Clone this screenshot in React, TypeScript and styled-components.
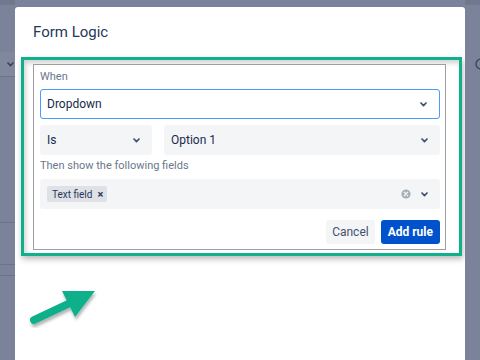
import React from "react";
import styled, { createGlobalStyle } from "styled-components";

const Global = createGlobalStyle`
  html, body {
    margin: 0;
    padding: 0;
    width: 480px;
    height: 360px;
    overflow: hidden;
    background: #7a8399;
    font-family: Roboto, "Liberation Sans", Arial, sans-serif;
  }
  * { box-sizing: border-box; }
`;

const Backdrop = styled.div`
  display: flex;
  width: 480px;
  height: 360px;
  overflow: hidden;
`;

const Strip = styled.div<{ $w: number }>`
  width: ${(p) => p.$w}px;
  flex: none;
  display: flex;
  flex-direction: column;
  overflow: hidden;
  background: #7a8399;
`;

const StripRow = styled.div<{ $h: number; $tone?: "dark" | "light" | "base"; $line?: boolean }>`
  height: ${(p) => p.$h}px;
  flex: none;
  display: flex;
  align-items: center;
  background: ${(p) => (p.$tone === "dark" ? "#6f788e" : p.$tone === "light" ? "#7f889d" : "#7a8399")};
  border-bottom: ${(p) => (p.$line ? "1px solid #6a7389" : "none")};
`;

const StripIcon = styled.div<{ $offset: number }>`
  margin-left: ${(p) => p.$offset}px;
  display: flex;
`;

const Modal = styled.div`
  width: 450px;
  flex: none;
  margin-top: 7px;
  background: #ffffff;
  border-radius: 3px 3px 0 0;
  display: flex;
  flex-direction: column;
`;

const Title = styled.h2`
  margin: 0;
  padding: 15px 18px 0;
  height: 35px;
  font-size: 15px;
  line-height: 20px;
  font-weight: 400;
  color: #253858;
`;

const Highlight = styled.div`
  margin: 15px 0 0 6px;
  width: 441px;
  height: 199px;
  border: 3px solid #10b08a;
  padding: 4px 13px 3px 9px;
  box-shadow: 1px 3px 6px rgba(0, 0, 0, 0.28), inset 2px 3px 5px rgba(0, 0, 0, 0.18);
`;

const Panel = styled.div`
  width: 413px;
  height: 186px;
  border: 1px solid #9e9e9e;
  background: #ffffff;
  padding: 5px 5px 5px 6px;
  display: flex;
  flex-direction: column;
`;

const Label = styled.div<{ $mt: number }>`
  margin-top: ${(p) => p.$mt}px;
  font-size: 11px;
  line-height: 14px;
  color: #6b778c;
`;

const Select = styled.div<{ $focused?: boolean; $w?: number; $mt?: number }>`
  height: 30px;
  margin-top: ${(p) => p.$mt ?? 0}px;
  ${(p) => (p.$w ? `width: ${p.$w}px; flex: none;` : "flex: 1;")}
  display: flex;
  align-items: center;
  padding: 0 12px 0 ${(p) => (p.$focused ? 6 : 7)}px;
  border-radius: 3px;
  background: ${(p) => (p.$focused ? "#ffffff" : "#f4f5f7")};
  border: ${(p) => (p.$focused ? "1px solid #4c9aff" : "none")};
  font-size: 12px;
  color: #172b4d;
`;

const Value = styled.span`
  flex: 1;
  white-space: nowrap;
`;

const Row = styled.div`
  display: flex;
  gap: 12px;
  margin-top: 6px;
`;

const Multi = styled.div`
  height: 30px;
  margin-top: 6px;
  display: flex;
  align-items: center;
  padding: 0 12px 0 7px;
  border-radius: 3px;
  background: #f4f5f7;
  gap: 10px;
`;

const Tags = styled.div`
  flex: 1;
  display: flex;
`;

const Tag = styled.div`
  height: 16px;
  display: flex;
  align-items: center;
  gap: 5px;
  padding: 0 4px 0 5px;
  border-radius: 2px;
  background: #dfe1e6;
  font-size: 10px;
  color: #253858;
`;

const TagX = styled.span`
  font-size: 11px;
  font-weight: 700;
  line-height: 1;
`;

const Actions = styled.div`
  margin-top: 11px;
  display: flex;
  justify-content: flex-end;
  gap: 6px;
`;

const Button = styled.button<{ $primary?: boolean }>`
  height: 24px;
  border: none;
  border-radius: 3px;
  padding: 0 ${(p) => (p.$primary ? 7 : 6)}px;
  font-family: Roboto, "Liberation Sans", Arial, sans-serif;
  font-size: 12px;
  font-weight: ${(p) => (p.$primary ? 700 : 400)};
  background: ${(p) => (p.$primary ? "#0052cc" : "#f4f5f7")};
  color: ${(p) => (p.$primary ? "#ffffff" : "#42526e")};
`;

const ArrowWrap = styled.div`
  margin: 30px 0 0 13px;
  display: flex;
`;

const Chevron = ({ color = "#42526e" }: { color?: string }) => (
  <svg width="7" height="5" viewBox="0 0 7 5">
    <path d="M1 1 L3.5 3.6 L6 1" fill="none" stroke={color} strokeWidth="1.7" strokeLinecap="round" strokeLinejoin="round" />
  </svg>
);

const ClearIcon = () => (
  <svg width="10" height="10" viewBox="0 0 10 10">
    <circle cx="5" cy="5" r="4.6" fill="#a5adba" />
    <path d="M3.3 3.3 L6.7 6.7 M6.7 3.3 L3.3 6.7" stroke="#f4f5f7" strokeWidth="1.3" strokeLinecap="round" />
  </svg>
);

const Arrow = () => (
  <svg width="72" height="42" viewBox="0 0 72 42">
    <defs>
      <filter id="sh" x="-20%" y="-20%" width="150%" height="160%">
        <feDropShadow dx="1" dy="3" stdDeviation="1.6" floodColor="#000" floodOpacity="0.3" />
      </filter>
    </defs>
    <g filter="url(#sh)" fill="#10b08a">
      <path d="M6 34 L40 18" stroke="#10b08a" strokeWidth="8" strokeLinecap="round" />
      <path d="M34 5 L67 5 L47 31 Z" />
    </g>
  </svg>
);

export default function App() {
  return (
    <>
      <Global />
      <Backdrop>
        <Strip $w={15}>
          <StripRow $h={5} $tone="dark" />
          <StripRow $h={47} />
          <StripRow $h={25} $tone="light" $line>
            <StripIcon $offset={7}>
              <Chevron color="#3b4560" />
            </StripIcon>
          </StripRow>
          <StripRow $h={146} $line />
          <StripRow $h={42} $line />
          <StripRow $h={11} $line />
          <StripRow $h={84} />
        </Strip>
        <Modal>
          <Title>Form Logic</Title>
          <Highlight>
            <Panel>
              <Label $mt={0}>When</Label>
              <Select $focused $mt={5}>
                <Value>Dropdown</Value>
                <Chevron />
              </Select>
              <Row>
                <Select $w={112}>
                  <Value>Is</Value>
                  <Chevron />
                </Select>
                <Select>
                  <Value>Option 1</Value>
                  <Chevron />
                </Select>
              </Row>
              <Label $mt={4}>Then show the following fields</Label>
              <Multi>
                <Tags>
                  <Tag>
                    Text field <TagX>×</TagX>
                  </Tag>
                </Tags>
                <ClearIcon />
                <Chevron />
              </Multi>
              <Actions>
                <Button>Cancel</Button>
                <Button $primary>Add rule</Button>
              </Actions>
            </Panel>
          </Highlight>
          <ArrowWrap>
            <Arrow />
          </ArrowWrap>
        </Modal>
        <Strip $w={15}>
          <StripRow $h={5} $tone="dark" />
          <StripRow $h={51} />
          <StripRow $h={15}>
            <StripIcon $offset={10}>
              <svg width="12" height="12" viewBox="0 0 12 12">
                <circle cx="6" cy="6" r="5" fill="none" stroke="#3b4560" strokeWidth="1.4" />
              </svg>
            </StripIcon>
          </StripRow>
          <StripRow $h={289} />
        </Strip>
      </Backdrop>
    </>
  );
}
